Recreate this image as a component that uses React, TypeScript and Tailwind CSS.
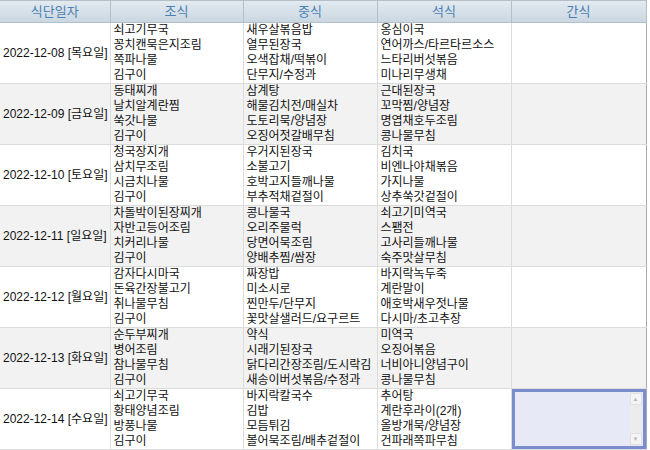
import React from "react";

type DayMenu = {
  date: string;
  breakfast: string[];
  lunch: string[];
  dinner: string[];
};

const menus: DayMenu[] = [
  {
    date: "2022-12-08 [목요일]",
    breakfast: ["쇠고기무국", "꽁치캔묵은지조림", "쪽파나물", "김구이"],
    lunch: ["새우살볶음밥", "열무된장국", "오색잡채/떡볶이", "단무지/수정과"],
    dinner: ["옹심이국", "연어까스/타르타르소스", "느타리버섯볶음", "미나리무생채"],
  },
  {
    date: "2022-12-09 [금요일]",
    breakfast: ["동태찌개", "날치알계란찜", "쑥갓나물", "김구이"],
    lunch: ["삼계탕", "해물김치전/매실차", "도토리묵/양념장", "오징어젓갈배무침"],
    dinner: ["근대된장국", "꼬막찜/양념장", "명엽채호두조림", "콩나물무침"],
  },
  {
    date: "2022-12-10 [토요일]",
    breakfast: ["청국장지개", "삼치무조림", "시금치나물", "김구이"],
    lunch: ["우거지된장국", "소불고기", "호박고지들깨나물", "부추적채겉절이"],
    dinner: ["김치국", "비엔나야채볶음", "가지나물", "상추쑥갓겉절이"],
  },
  {
    date: "2022-12-11 [일요일]",
    breakfast: ["차돌박이된장찌개", "자반고등어조림", "치커리나물", "김구이"],
    lunch: ["콩나물국", "오리주물럭", "당면어묵조림", "양배추찜/쌈장"],
    dinner: ["쇠고기미역국", "스팸전", "고사리들깨나물", "숙주맛살무침"],
  },
  {
    date: "2022-12-12 [월요일]",
    breakfast: ["감자다시마국", "돈육간장불고기", "취나물무침", "김구이"],
    lunch: ["짜장밥", "미소시로", "찐만두/단무지", "꽃맛살샐러드/요구르트"],
    dinner: ["바지락녹두죽", "계란말이", "애호박새우젓나물", "다시마/초고추장"],
  },
  {
    date: "2022-12-13 [화요일]",
    breakfast: ["순두부찌개", "병어조림", "참나물무침", "김구이"],
    lunch: ["약식", "시래기된장국", "닭다리간장조림/도시락김", "새송이버섯볶음/수정과"],
    dinner: ["미역국", "오징어볶음", "너비아니양념구이", "콩나물무침"],
  },
  {
    date: "2022-12-14 [수요일]",
    breakfast: ["쇠고기무국", "황태양념조림", "방풍나물", "김구이"],
    lunch: ["바지락칼국수", "김밥", "모듬튀김", "볼어묵조림/배추겉절이"],
    dinner: ["추어탕", "계란후라이(2개)", "올방개묵/양념장", "건파래쪽파무침"],
  },
];

const headers = ["식단일자", "조식", "중식", "석식", "간식"];

function MenuCell({ items }: { items: string[] }) {
  return (
    <td className="border-r border-[#dcdcdc] px-[3px] align-middle">
      {items.map((item, i) => (
        <div key={i} className="whitespace-nowrap">
          {item}
        </div>
      ))}
    </td>
  );
}

function SnackBox() {
  return (
    <div className="flex h-[60px] border-[3px] border-[#7b8dcd] bg-[#e7e9f6]">
      <div className="flex-1" />
      <div className="my-px mr-px flex w-[12px] flex-col justify-between bg-[#ececec]">
        <div className="flex h-[12px] items-center justify-center border border-[#e0e0e0] bg-[#f4f4f4] text-[6px] leading-none text-[#b8b8b8]">
          ▲
        </div>
        <div className="flex h-[12px] items-center justify-center border border-[#e0e0e0] bg-[#f4f4f4] text-[6px] leading-none text-[#b8b8b8]">
          ▼
        </div>
      </div>
    </div>
  );
}

export default function App() {
  return (
    <div className="h-[450px] w-[650px] bg-white font-['Liberation_Sans','Noto_Sans_CJK_KR',sans-serif] text-[12px] leading-[15px] text-[#111]">
      <table className="w-[646px] table-fixed border-collapse border-r border-b border-[#a9a9a9]">
        <colgroup>
          <col className="w-[110px]" />
          <col className="w-[133px]" />
          <col className="w-[134px]" />
          <col className="w-[134px]" />
          <col className="w-[135px]" />
        </colgroup>
        <thead>
          <tr className="h-[22px] bg-gradient-to-b from-[#e3eaf0] to-[#c9d6e0]">
            {headers.map((h) => (
              <th
                key={h}
                className="border-r border-b border-t border-[#b3c0ca] text-center text-[13px] font-normal text-[#4a7fb3]"
              >
                {h}
              </th>
            ))}
          </tr>
        </thead>
        <tbody>
          {menus.map((m, idx) => (
            <tr
              key={m.date}
              className={
                "h-[60.6px] border-b border-[#dcdcdc] " +
                (idx % 2 === 1 ? "bg-[#f2f2f2]" : "bg-white")
              }
            >
              <td className="whitespace-nowrap border-r border-[#dcdcdc] pl-[3px] align-middle">
                {m.date}
              </td>
              <MenuCell items={m.breakfast} />
              <MenuCell items={m.lunch} />
              <MenuCell items={m.dinner} />
              <td className="p-0 align-middle">
                {idx === menus.length - 1 ? <SnackBox /> : null}
              </td>
            </tr>
          ))}
        </tbody>
      </table>
    </div>
  );
}
